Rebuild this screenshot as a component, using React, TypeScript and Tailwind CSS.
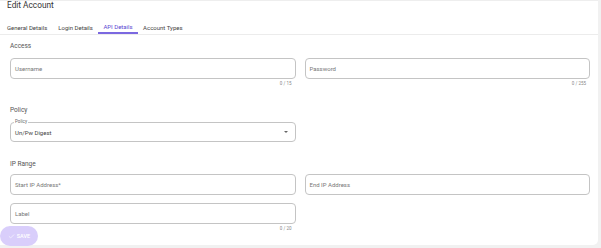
import { Check } from "lucide-react";

function Field({ label, counter }: { label: string; counter?: string }) {
  return (
    <div className="flex flex-col">
      <div className="h-[21px] rounded-[4px] border border-[#c4c4c4] flex items-center px-[4px] text-[6px] text-[#777]">
        {label}
      </div>
      {counter && (
        <p className="h-[9px] pr-[4px] text-right text-[4.5px] leading-[9px] text-[#888]">{counter}</p>
      )}
    </div>
  );
}

function SectionTitle({ children }: { children: string }) {
  return <h2 className="h-[12px] leading-[12px] text-[6.5px] text-[#555]">{children}</h2>;
}

const tabs = ["General Details", "Login Details", "API Details", "Account Types"];

export default function App() {
  return (
    <div className="relative w-[601px] h-[248px] overflow-hidden bg-[#f1f1f1] font-['Roboto',sans-serif]">
      <div className="w-[598px] h-[245px] bg-white rounded-br-[5px] border-t border-[#eeeeee]">
        <h1 className="h-[13px] px-[7px] text-[8.3px] leading-[9px] text-[#333]">Edit Account</h1>
        <nav className="mt-[6px] h-[15px] pl-[1.5px] flex border-b-[1.5px] border-[#ececec]">
          {tabs.map((t) => (
            <div
              key={t}
              className={
                t === "API Details"
                  ? "px-[5px] flex items-center text-[6px] text-[#5b48d2] border-b-[2px] border-[#7b68e0]"
                  : "px-[5.5px] flex items-center text-[6px] text-[#444]"
              }
            >
              {t}
            </div>
          ))}
        </nav>
        <div className="pl-[10px] pr-[8px] pt-[5px]">
          <SectionTitle>Access</SectionTitle>
          <div className="mt-[6px] grid grid-cols-2 gap-x-[9px]">
            <Field label="Username" counter="0 / 15" />
            <Field label="Password" counter="0 / 255" />
          </div>
          <div className="mt-[16px]">
            <SectionTitle>Policy</SectionTitle>
          </div>
          <div className="mt-[6px] grid grid-cols-2 gap-x-[9px]">
            <div className="relative h-[20px] rounded-[4px] border border-[#c4c4c4] flex items-center justify-between pl-[4px] pr-[7px] text-[6px] text-[#444]">
              <span className="absolute left-[3px] top-[-4px] bg-white px-[1px] text-[4.5px] leading-[6px] text-[#666]">
                Policy
              </span>
              <span className="pt-px font-normal">Un/Pw Digest</span>
              <span className="w-0 h-0 border-l-[2px] border-r-[2px] border-t-[2.5px] border-l-transparent border-r-transparent border-t-[#666]" />
            </div>
          </div>
          <div className="mt-[16px]">
            <SectionTitle>IP Range</SectionTitle>
          </div>
          <div className="mt-[4px] grid grid-cols-2 gap-x-[9px] gap-y-[8px]">
            <Field label="Start IP Address*" />
            <Field label="End IP Address" />
            <Field label="Label" counter="0 / 20" />
          </div>
        </div>
      </div>
      <button className="absolute left-0 top-[226px] h-[20px] w-[38px] rounded-full bg-[#d9cefb] flex items-center justify-center gap-[2px] text-white text-[5.5px] font-medium">
        <Check size={7} strokeWidth={2} />
        SAVE
      </button>
    </div>
  );
}
